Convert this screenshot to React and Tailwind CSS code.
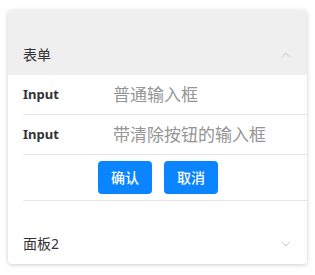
import React from 'react';

const font = { fontFamily: '"Noto Sans", "Noto Sans CJK SC", sans-serif' };

const Chevron = ({ up }) => (
    <svg width="10" height="6" viewBox="0 0 10 6" className="text-[#c8c8c8]">
        <path
            d={up ? 'M1 5.5 L5 1 L9 5.5' : 'M1 0.5 L5 5 L9 0.5'}
            fill="none"
            stroke="currentColor"
            strokeWidth="1"
        />
    </svg>
);

const PanelHeader = ({ title, open, className = '' }) => (
    <div className={`flex items-center justify-between pb-[10px] pl-[15px] pr-[16px] ${className}`}>
        <span className="text-[14px] leading-[20px] text-[#333]">{title}</span>
        <Chevron up={open} />
    </div>
);

const Row = ({ label, placeholder }) => (
    <div className="flex items-center h-[40px] border-b border-[#e5e5e5]">
        <span className="w-[90px] text-[13px] font-bold text-[#333]">{label}</span>
        <span className="text-[17px] text-[#959595]">{placeholder}</span>
    </div>
);

export default function App() {
    return (
        <div className="w-[315px] h-[275px] bg-white pt-[10px] px-[8px]" style={font}>
            <div className="rounded-[4px] bg-white shadow-[0_1px_4px_rgba(0,0,0,0.2)] overflow-hidden">
                {/* Panel 1 */}
                <PanelHeader title="表单" open className="bg-[#efefef] pt-[35px]" />
                <div className="pl-[15px]">
                    <Row label="Input" placeholder="普通输入框" />
                    <Row label="Input" placeholder="带清除按钮的输入框" />
                    <div className="flex items-center gap-[12px] pl-[75px] h-[46px] border-b border-[#e5e5e5]">
                        <button className="w-[54px] h-[33px] rounded-[4px] bg-[#0a84ff] text-white text-[14px] font-medium">
                            确认
                        </button>
                        <button className="w-[54px] h-[33px] rounded-[4px] bg-[#0a84ff] text-white text-[14px] font-medium">
                            取消
                        </button>
                    </div>
                </div>

                {/* Panel 2 */}
                <PanelHeader title="面板2" className="pt-[33px]" />
            </div>
        </div>
    );
}
